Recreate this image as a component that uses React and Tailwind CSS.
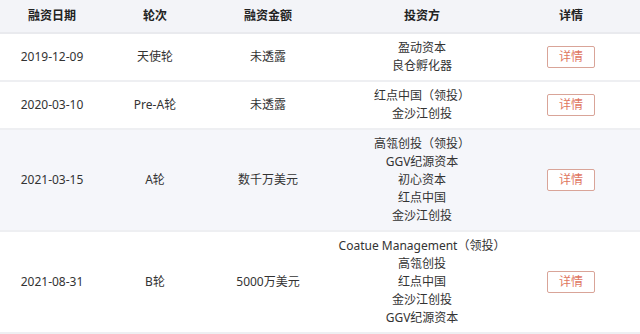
import React from "react";

const rows = [
  { date: "2019-12-09", round: "天使轮", amount: "未透露", investors: ["盈动资本", "良仓孵化器"] },
  { date: "2020-03-10", round: "Pre-A轮", amount: "未透露", investors: ["红点中国（领投）", "金沙江创投"] },
  { date: "2021-03-15", round: "A轮", amount: "数千万美元", investors: ["高瓴创投（领投）", "GGV纪源资本", "初心资本", "红点中国", "金沙江创投"], shade: true },
  { date: "2021-08-31", round: "B轮", amount: "5000万美元", investors: ["Coatue Management（领投）", "高瓴创投", "红点中国", "金沙江创投", "GGV纪源资本"] },
];

const cols = "grid grid-cols-[104px_102px_124px_184px_114px]";

export default function App() {
  return (
    <div
      className="w-[640px] h-[334px] overflow-hidden bg-white text-[12px] text-[#333]"
      style={{ fontFamily: '"Noto Sans", "Noto Sans CJK SC", sans-serif' }}
    >
      {/* header */}
      <div className={`${cols} h-[34px] items-center bg-[#f3f4f8] border-b-2 border-[#e9eaee] font-bold text-[#222]`}>
        <div className="text-center">融资日期</div>
        <div className="text-center">轮次</div>
        <div className="text-center">融资金额</div>
        <div className="text-center">投资方</div>
        <div className="text-center">详情</div>
      </div>

      {rows.map((r, i) => (
        <div
          key={i}
          className={`${cols} items-center py-[5px] border-b-2 border-[#eeeff2] ${r.shade ? "bg-[#f5f6fa]" : "bg-white"}`}
        >
          <div className="text-center">{r.date}</div>
          <div className="text-center">{r.round}</div>
          <div className="text-center">{r.amount}</div>
          <div className="flex flex-col items-center leading-[18px] whitespace-nowrap">
            {r.investors.map((n, j) => (
              <span key={j}>{n}</span>
            ))}
          </div>
          <div className="flex justify-center">
            <button className="w-[48px] h-[22px] rounded-[2px] border border-[#d9a498] bg-white text-[#e0765f] text-[12px] leading-none">
              详情
            </button>
          </div>
        </div>
      ))}
    </div>
  );
}
